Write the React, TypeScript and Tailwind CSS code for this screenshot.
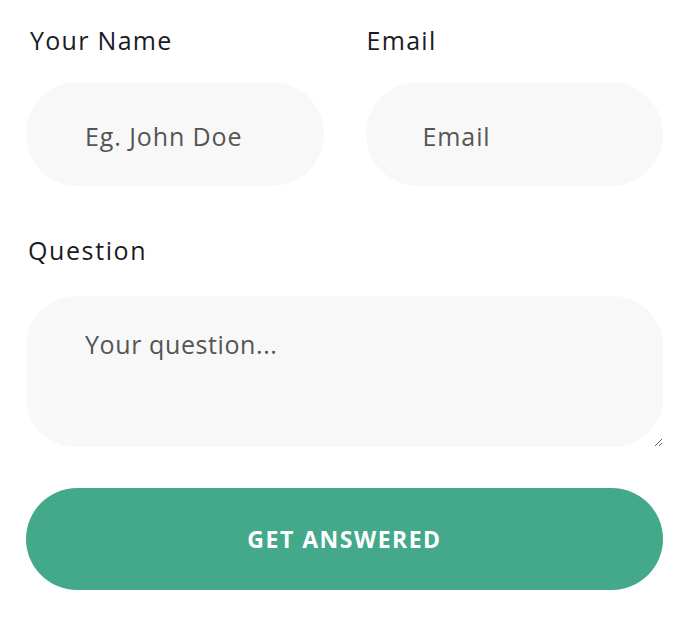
export default function App() {
  return (
    <div className="min-h-[635px] w-[700px] bg-white pl-[26px] pr-[37px] pt-[24px] font-['Open_Sans',sans-serif]">
      <form className="flex flex-col">
        <div className="grid grid-cols-2 gap-x-[42px]">
          <label className="flex flex-col">
            <span className="pl-[4px] text-[25px] leading-[32px] tracking-[1.3px] text-[#1b1b24]">Your Name</span>
            <input
              type="text"
              placeholder="Eg. John Doe"
              className="mt-[26px] h-[104px] rounded-[52px] bg-[#f8f8f8] pl-[59px] pt-[4px] text-[25px] tracking-[0.9px] text-[#333] outline-none placeholder:text-[#555]"
            />
          </label>
          <label className="flex flex-col">
            <span className="pl-[1px] text-[25px] leading-[32px] tracking-[1.3px] text-[#1b1b24]">Email</span>
            <input
              type="email"
              placeholder="Email"
              className="mt-[26px] h-[104px] rounded-[52px] bg-[#f8f8f8] pl-[57px] pt-[4px] text-[25px] tracking-[0.9px] text-[#333] outline-none placeholder:text-[#555]"
            />
          </label>
        </div>

        <label className="mt-[48px] flex flex-col">
          <span className="pl-[2px] text-[25px] leading-[32px] tracking-[1.6px] text-[#1b1b24]">Question</span>
          <textarea
            placeholder="Your question..."
            className="mt-[30px] h-[151px] resize-y rounded-[50px] bg-[#f8f8f8] pl-[59px] pr-[20px] pt-[32px] text-[25px] leading-[32px] tracking-[0.6px] text-[#333] outline-none placeholder:text-[#555]"
          />
        </label>

        <button
          type="button"
          className="mt-[41px] h-[102px] rounded-[51px] bg-[#43a98a] text-[23px] font-bold tracking-[1.5px] text-white"
        >
          GET ANSWERED
        </button>
      </form>
    </div>
  )
}
